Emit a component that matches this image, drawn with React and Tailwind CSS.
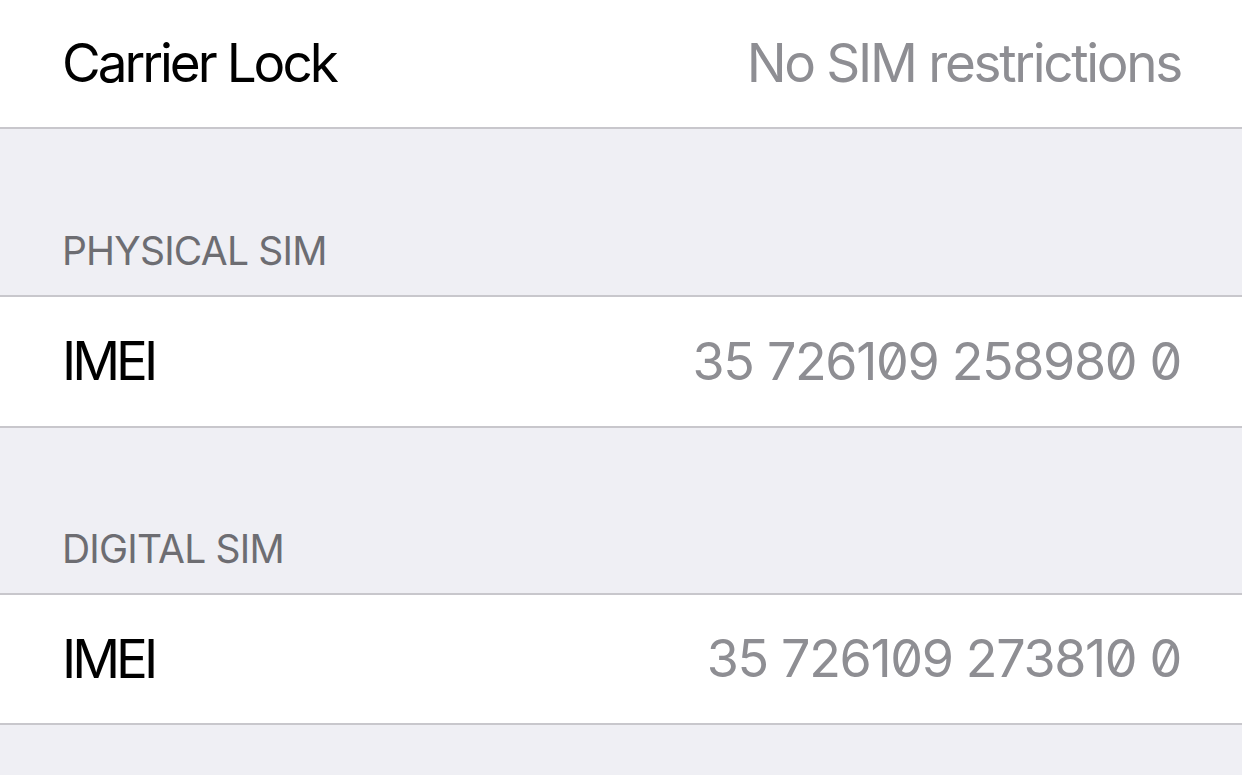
export default function App() {
  const label = "text-[53px] leading-none text-black tracking-[-3px]";
  const imei = "text-[53px] leading-none text-black tracking-[-4px]";
  const value = "text-[53px] leading-none text-[#8e8e93] tracking-[-2.3px]";
  const num = "text-[52px] leading-none text-[#8e8e93] tracking-[-1.35px] [font-feature-settings:'zero']";
  const header = "flex items-end pb-[25px] pl-[62px] text-[39px] leading-none text-[#6d6d72] tracking-[-0.8px]";
  return (
    <div className="w-full min-h-screen bg-[#efeff4] font-['Inter','Noto_Sans',sans-serif]">
      <div className="h-[129px] bg-white flex items-center justify-between pl-[62px] pr-[61px] border-b-2 border-[#c8c7cc]">
        <span className={label}>Carrier Lock</span>
        <span className={value}>No SIM restrictions</span>
      </div>
      <div className={"h-[166px] " + header}>PHYSICAL SIM</div>
      <div className="h-[133px] bg-white flex items-center justify-between pl-[62px] pr-[61px] border-y-2 border-[#c8c7cc]">
        <span className={imei}>IMEI</span>
        <span className={num}>35 726109 258980 0</span>
      </div>
      <div className={"h-[165px] " + header}>DIGITAL SIM</div>
      <div className="h-[132px] bg-white flex items-center justify-between pl-[62px] pr-[61px] border-y-2 border-[#c8c7cc]">
        <span className={imei}>IMEI</span>
        <span className={num}>35 726109 273810 0</span>
      </div>
    </div>
  );
}
